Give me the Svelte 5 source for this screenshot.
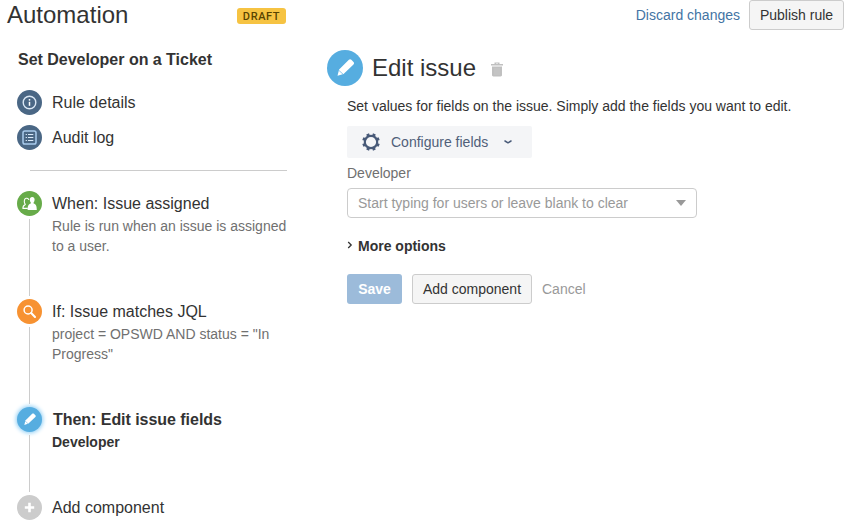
<script>
  const steps = [
    { kind: 'people', color: '#67ab49', title: 'When: Issue assigned', detail: 'Rule is run when an issue is assigned to a user.' },
    { kind: 'search', color: '#f79232', title: 'If: Issue matches JQL', detail: 'project = OPSWD AND status = "In Progress"' },
    { kind: 'pencil', color: '#56ade0', title: 'Then: Edit issue fields', detail: 'Developer', active: true },
    { kind: 'plus', color: '#ccc', title: 'Add component', last: true }
  ];
</script>

{#snippet icon(kind)}
  <svg viewBox="0 0 25 25" fill="none" stroke="#fff" stroke-width="1.5" stroke-linecap="round" stroke-linejoin="round">
    {#if kind === 'info'}
      <circle cx="12.5" cy="12.5" r="6.3" stroke="#dbe8f5" stroke-width="1.4" />
      <path d="M12.5 11.8v4" stroke-width="1.5" stroke-linecap="butt" />
      <circle cx="12.5" cy="9.8" r=".9" fill="#fff" stroke="none" />
    {:else if kind === 'list'}
      <rect x="6" y="6" width="13" height="13" rx="1.8" stroke="#a9cbed" stroke-width="1.5" />
      <path d="M8.7 9.5h1.2M8.7 12.5h1.2M8.7 15.5h1.2M11 9.5h5.3M11 12.5h5.3M11 15.5h5.3" stroke="#dbeafa" stroke-width="1.2" stroke-linecap="butt" />
    {:else if kind === 'people'}
      <path d="M10.3 17.4H5.9c-.1-2.1.5-3.1 2.4-4-1.3-1.4-1.7-5.6.8-6.1 1.2-.2 2.1.2 2.6 1.1" stroke-width="1.1" />
      <path d="M15.2 5.9c1.8 0 2.6 1.4 2.4 3.1-.1 1.1-.5 1.9-1 2.4v1.1c2.4.9 3.2 2.3 3.2 6.5h-9.2c0-4.2.8-5.6 3.2-6.5v-1.1c-.5-.5-.9-1.3-1-2.4-.2-1.7.6-3.1 2.4-3.1Z" fill="#fff" stroke="none" />
    {:else if kind === 'search'}
      <circle cx="11.1" cy="11" r="4" />
      <path d="M14.2 14.1l3.8 3.8" stroke-width="2.1" />
    {:else if kind === 'pencil'}
      <path d="M15.2 6.8c.5-.5 1.2-.5 1.7 0l1.5 1.5c.5.5.5 1.2 0 1.7l-6.9 6.6-4.2 1.3 1.1-4.3Z" fill="#fff" stroke="none" />
      <path d="M8.4 14.3l2.5 2.3" stroke="#56ade0" stroke-width=".5" />
    {:else}
      <path d="M12.5 7.8v9.4M7.8 12.5h9.4" stroke-width="2.6" stroke-linecap="butt" />
    {/if}
  </svg>
{/snippet}

<div class="page">
  <aside>
    <header class="brand"><h1>Automation</h1><span class="badge">DRAFT</span></header>
    <h2>Set Developer on a Ticket</h2>
    <nav>
      <div class="link"><span class="dot">{@render icon('info')}</span>Rule details</div>
      <div class="link"><span class="dot">{@render icon('list')}</span>Audit log</div>
    </nav>
    <hr />
    {#each steps as step}
      <div class="step" class:active={step.active} class:last={step.last}>
        <div class="rail">
          <span class="dot" style:background={step.color}>{@render icon(step.kind)}</span>
          {#if !step.last}<i></i>{/if}
        </div>
        <div class="copy">
          <div class="title">{step.title}</div>
          {#if step.detail}<p>{step.detail}</p>{/if}
        </div>
      </div>
    {/each}
  </aside>

  <main>
    <div class="actions"><a href="#discard">Discard changes</a><button>Publish rule</button></div>
    <div class="heading">
      <span class="big">{@render icon('pencil')}</span>
      <h1>Edit issue</h1>
      <svg class="trash" width="12" height="15" viewBox="0 0 12 15" fill="#c0c0c0"><path d="M0 2h3.5V.5h5V2H12v1.6H0Z M5 1.5V2h2v-.5Z" fill-rule="evenodd" /><path d="M1 4.6h10V13c0 .9-.5 1.4-1.4 1.4H2.4C1.5 14.4 1 13.9 1 13Z" /><path d="M4 6v7M6 6v7M8 6v7" stroke="#ccc" stroke-width=".7" /></svg>
    </div>
    <div class="form">
      <p class="intro">Set values for fields on the issue. Simply add the fields you want to edit.</p>
      <div class="configure">
        <svg width="20" height="20" viewBox="0 0 20 20" fill="none" stroke="#485a78">
          <circle cx="10" cy="10" r="6.2" stroke-width="2.2" />
          {#each [22.5, 67.5, 112.5, 157.5, 202.5, 247.5, 292.5, 337.5] as angle}
            <path d="M10 4V1.2" stroke-width="3" transform={`rotate(${angle} 10 10)`} />
          {/each}
        </svg>
        <span>Configure fields</span>
        <svg class="chev" width="10" height="6" viewBox="0 0 10 6" fill="none" stroke="#485a78" stroke-width="1.5" stroke-linecap="round" stroke-linejoin="round"><path d="M2 2l3 1.8 3-1.8" /></svg>
      </div>
      <div class="label">Developer</div>
      <div class="select"><span>Start typing for users or leave blank to clear</span><i></i></div>
      <div class="more"><svg width="6" height="8" viewBox="0 0 6 8" fill="none" stroke="#333" stroke-width="1.3"><path d="M1.2 1l3 3-3 3" /></svg>More options</div>
      <div class="buttons"><button class="save">Save</button><button>Add component</button><span>Cancel</span></div>
    </div>
  </main>
</div>

<style>
  :global(body) { background: #fff; overflow: hidden; }
  .page { display: flex; width: 858px; height: 527px; overflow: hidden; font: 14px/20px "Liberation Sans", Arial, sans-serif; color: #333; }
  h1, h2, p { margin: 0; font-weight: 400; }
  h1 { font-size: 24px; line-height: 30px; }
  svg { display: block; flex: none; }
  aside { width: 327px; flex: none; }
  .brand { display: flex; height: 30px; padding-left: 7px; }
  .brand h1 { width: 230px; }
  .badge { box-sizing: border-box; width: 49px; height: 16px; margin-top: 8px; border-radius: 3px; background: #f6c342; color: #594300; font: 500 11px/17px Roboto, "Liberation Sans", sans-serif; letter-spacing: .6px; text-align: center; }
  h2 { margin: 20px 0 0 18px; font-size: 16px; line-height: 20px; font-weight: 700; letter-spacing: -.02px; }
  nav { padding: 20px 0 0 17px; }
  .link { display: flex; height: 25px; margin-bottom: 10px; gap: 10px; font-size: 16px; line-height: 25px; }
  .dot { display: block; flex: none; width: 25px; height: 25px; border-radius: 50%; background: #4a6785; }
  .dot svg { width: 25px; height: 25px; }
  hr { width: 257px; height: 1px; margin: 20px 0 20px 30px; border: 0; background: #ccc; }
  .step { display: flex; height: 108px; padding-left: 17px; gap: 10px; }
  .rail { display: flex; flex-direction: column; width: 25px; height: 100%; }
  .rail i { flex: 1; width: 1px; margin: 3px 0 3px 12px; background: #ccc; }
  .copy { width: 245px; }
  .title { font-size: 16px; line-height: 25px; }
  .copy p { color: #707070; }
  .active { height: 88px; }
  .active .dot { box-shadow: 0 0 4px 1px #8bcdf5; }
  .active .title { font-weight: 700; padding-left: 1px; letter-spacing: -.04px; }
  .active p { font-weight: 700; color: #333; }
  .last { height: 25px; }
  main { width: 517px; }
  .actions { display: flex; justify-content: flex-end; height: 30px; gap: 9px; line-height: 30px; }
  a { color: #4374a4; text-decoration: none; }
  button { box-sizing: border-box; height: 30px; padding: 0; width: 95px; border: 1px solid #ccc; border-radius: 3px; background: #f5f5f5; color: #333; font: inherit; line-height: 28px; }
  .heading { display: flex; height: 36px; margin-top: 20px; align-items: center; }
  .big { width: 36px; height: 36px; margin-right: 9px; border-radius: 50%; background: #56ade0; }
  .big svg { width: 36px; height: 36px; }
  .trash { margin: 2px 0 0 14.5px; }
  .form { padding-left: 20px; }
  .intro { margin-top: 10px; }
  .configure { display: flex; align-items: center; box-sizing: border-box; width: 185px; height: 32px; margin-top: 10px; padding-left: 14px; background: #f4f5f7; color: #505f79; border-radius: 2px; }
  .configure span { margin-left: 10px; }
  .chev { margin-left: 15px; }
  .label { margin-top: 5px; color: #707070; }
  .select { display: flex; justify-content: space-between; align-items: center; box-sizing: border-box; width: 350px; height: 30px; margin-top: 5px; padding: 0 10px; border: 1px solid #ccc; border-radius: 4px; color: #999; }
  .select i { border: 5px solid transparent; border-top: 6px solid #999; border-bottom: 0; }
  .more { display: flex; align-items: center; margin-top: 18px; gap: 5px; font-weight: 700; }
  .more svg { margin-top: -3px; }
  .buttons { display: flex; margin-top: 18px; gap: 10px; line-height: 30px; color: #999; }
  .buttons button { width: 120px; }
  .buttons .save { width: 55px; border: 0; background: #9cbbda; color: #fff; font-weight: 700; }
</style>
